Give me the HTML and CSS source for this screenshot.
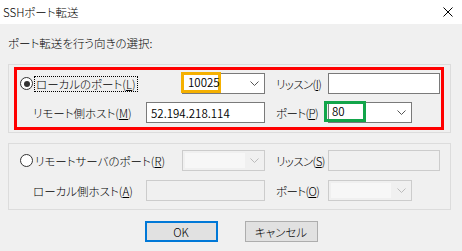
FILE: index.html
```html
<!DOCTYPE html>
<html lang="ja">
<head>
    <meta charset="UTF-8">
    <title>SSHポート転送</title>
    <link rel="stylesheet" href="styles.css">
</head>
<body>
    <div class="dialog">
        <!-- Title bar -->
        <div class="titlebar">
            <span class="title">SSHポート転送</span>
            <svg class="close" width="10" height="10" viewBox="0 0 10 10">
                <path d="M0.5 0.5 L9.5 9.5 M9.5 0.5 L0.5 9.5" stroke="#000" stroke-width="1" fill="none"/>
            </svg>
        </div>

        <div class="content">
            <p class="prompt">ポート転送を行う向きの選択:</p>

            <!-- Local port forwarding -->
            <div class="group group-local">
                <div class="highlight">
                    <div class="row">
                        <div class="lead">
                            <span class="radio checked"></span>
                            <span class="focus">ローカルのポート(<u>L</u>)</span>
                        </div>
                        <div class="combo">
                            <span class="value mark-orange">10025</span>
                            <svg class="chevron" width="9" height="5" viewBox="0 0 9 5"><path d="M0.5 0.5 L4.5 4.5 L8.5 0.5" stroke="#555" fill="none"/></svg>
                        </div>
                        <span class="label">リッスン(<u>I</u>)</span>
                        <div class="edit wide"></div>
                    </div>
                    <div class="row">
                        <div class="lead indent">リモート側ホスト(<u>M</u>)</div>
                        <div class="edit host"><span class="value">52.194.218.114</span></div>
                        <span class="label">ポート(<u>P</u>)</span>
                        <div class="combo port">
                            <span class="value mark-green">80</span>
                            <svg class="chevron" width="9" height="5" viewBox="0 0 9 5"><path d="M0.5 0.5 L4.5 4.5 L8.5 0.5" stroke="#555" fill="none"/></svg>
                        </div>
                    </div>
                </div>
            </div>

            <!-- Remote port forwarding -->
            <div class="group group-remote">
                <div class="row">
                    <div class="lead">
                        <span class="radio"></span>
                        <span class="plain">リモートサーバのポート(<u>R</u>)</span>
                    </div>
                    <div class="combo disabled">
                        <span class="value"></span>
                        <svg class="chevron" width="9" height="5" viewBox="0 0 9 5"><path d="M0.5 0.5 L4.5 4.5 L8.5 0.5" stroke="#bbb" fill="none"/></svg>
                    </div>
                    <span class="label">リッスン(<u>S</u>)</span>
                    <div class="edit wide disabled"></div>
                </div>
                <div class="row">
                    <div class="lead indent">ローカル側ホスト(<u>A</u>)</div>
                    <div class="edit host disabled"></div>
                    <span class="label">ポート(<u>O</u>)</span>
                    <div class="combo port disabled">
                        <span class="value"></span>
                        <svg class="chevron" width="9" height="5" viewBox="0 0 9 5"><path d="M0.5 0.5 L4.5 4.5 L8.5 0.5" stroke="#bbb" fill="none"/></svg>
                    </div>
                </div>
            </div>

            <div class="buttons">
                <button class="default">OK</button>
                <button>キャンセル</button>
            </div>
        </div>
    </div>
</body>
</html>
```

FILE: styles.css
```css
body {
    margin: 0;
    font-family: "Noto Sans CJK JP", "Noto Sans", sans-serif;
    font-size: 11.5px;
    font-weight: 300;
    font-feature-settings: "palt";
    color: #000;
    background: #f0f0f0;
}
.dialog {
    width: 462px;
    height: 251px;
    background: #f0f0f0;
}
.titlebar {
    height: 24px;
    background: #fff;
    display: flex;
    align-items: center;
    justify-content: space-between;
    padding: 0 9px 0 3px;
    box-sizing: border-box;
}
.close {
    display: block;
}
.content {
    padding: 0 11px 0 8px;
}
.prompt {
    margin: 0;
    height: 40px;
    line-height: 38px;
}
.group {
    border: 1px solid #dcdcdc;
    box-sizing: border-box;
}
.group-local {
    padding: 2px 6px 2px 5px;
}
.highlight {
    border: 3px solid #ff0000;
    padding: 3px 0 4px 3px;
    display: flex;
    flex-direction: column;
    gap: 8px;
}
.group-remote {
    margin-top: 10px;
    padding: 6px 0 8px 11px;
    display: flex;
    flex-direction: column;
    gap: 9px;
}
.row {
    display: flex;
    align-items: center;
    height: 21px;
}
.lead {
    width: 162px;
    display: flex;
    align-items: center;
    flex-shrink: 0;
}
.lead.indent {
    width: 113px;
    padding-left: 13px;
}
.radio {
    width: 11px;
    height: 11px;
    border: 1px solid #333;
    border-radius: 50%;
    background: #fff;
    margin-right: 1px;
    position: relative;
    flex-shrink: 0;
}
.radio.checked::after {
    content: "";
    position: absolute;
    left: 2.5px;
    top: 2.5px;
    width: 6px;
    height: 6px;
    border-radius: 50%;
    background: #333;
}
.focus {
    border: 1px dotted #000;
    padding: 0 1px;
    line-height: 14px;
}
.plain {
    padding: 0 1px;
}
.label {
    margin-left: 11px;
    width: 52px;
    flex-shrink: 0;
    white-space: nowrap;
    letter-spacing: -0.6px;
}
.combo, .edit {
    height: 21px;
    box-sizing: border-box;
    border: 1px solid #7a7a7a;
    background: #fff;
    display: flex;
    align-items: center;
    position: relative;
}
.combo {
    width: 83px;
}
.combo.port {
    width: 84px;
}
.edit.wide {
    width: 112px;
}
.edit.host {
    width: 119px;
}
.value {
    font-size: 11.5px;
    font-weight: 350;
    padding-left: 4px;
}
.chevron {
    position: absolute;
    right: 5px;
    top: 7px;
}
.mark-orange {
    position: absolute;
    left: -2px;
    top: -2px;
    width: 40px;
    height: 21px;
    box-sizing: border-box;
    border: 3px solid #f5b000;
    line-height: 15px;
    padding-left: 4px;
}
.mark-green {
    position: absolute;
    left: -5px;
    top: -2px;
    width: 42px;
    height: 21px;
    box-sizing: border-box;
    border: 3px solid #12a54a;
    line-height: 15px;
    padding-left: 5px;
}
.disabled {
    border-color: #cccccc;
    background: #f0f0f0;
}
.combo.disabled .value {
    align-self: stretch;
    width: 60px;
    margin: 2px;
    padding: 0;
    background: #f7f7f7;
}
.buttons {
    display: flex;
    justify-content: center;
    gap: 27px;
    margin-top: 11px;
    padding-left: 3px;
}
button {
    width: 73px;
    height: 21px;
    font-family: inherit;
    font-size: 11.5px;
    font-weight: 300;
    font-feature-settings: "palt";
    color: #000;
    background: #e1e1e1;
    border: 1px solid #adadad;
    padding: 0;
}
button.default {
    border: 2px solid #0078d7;
}
```
